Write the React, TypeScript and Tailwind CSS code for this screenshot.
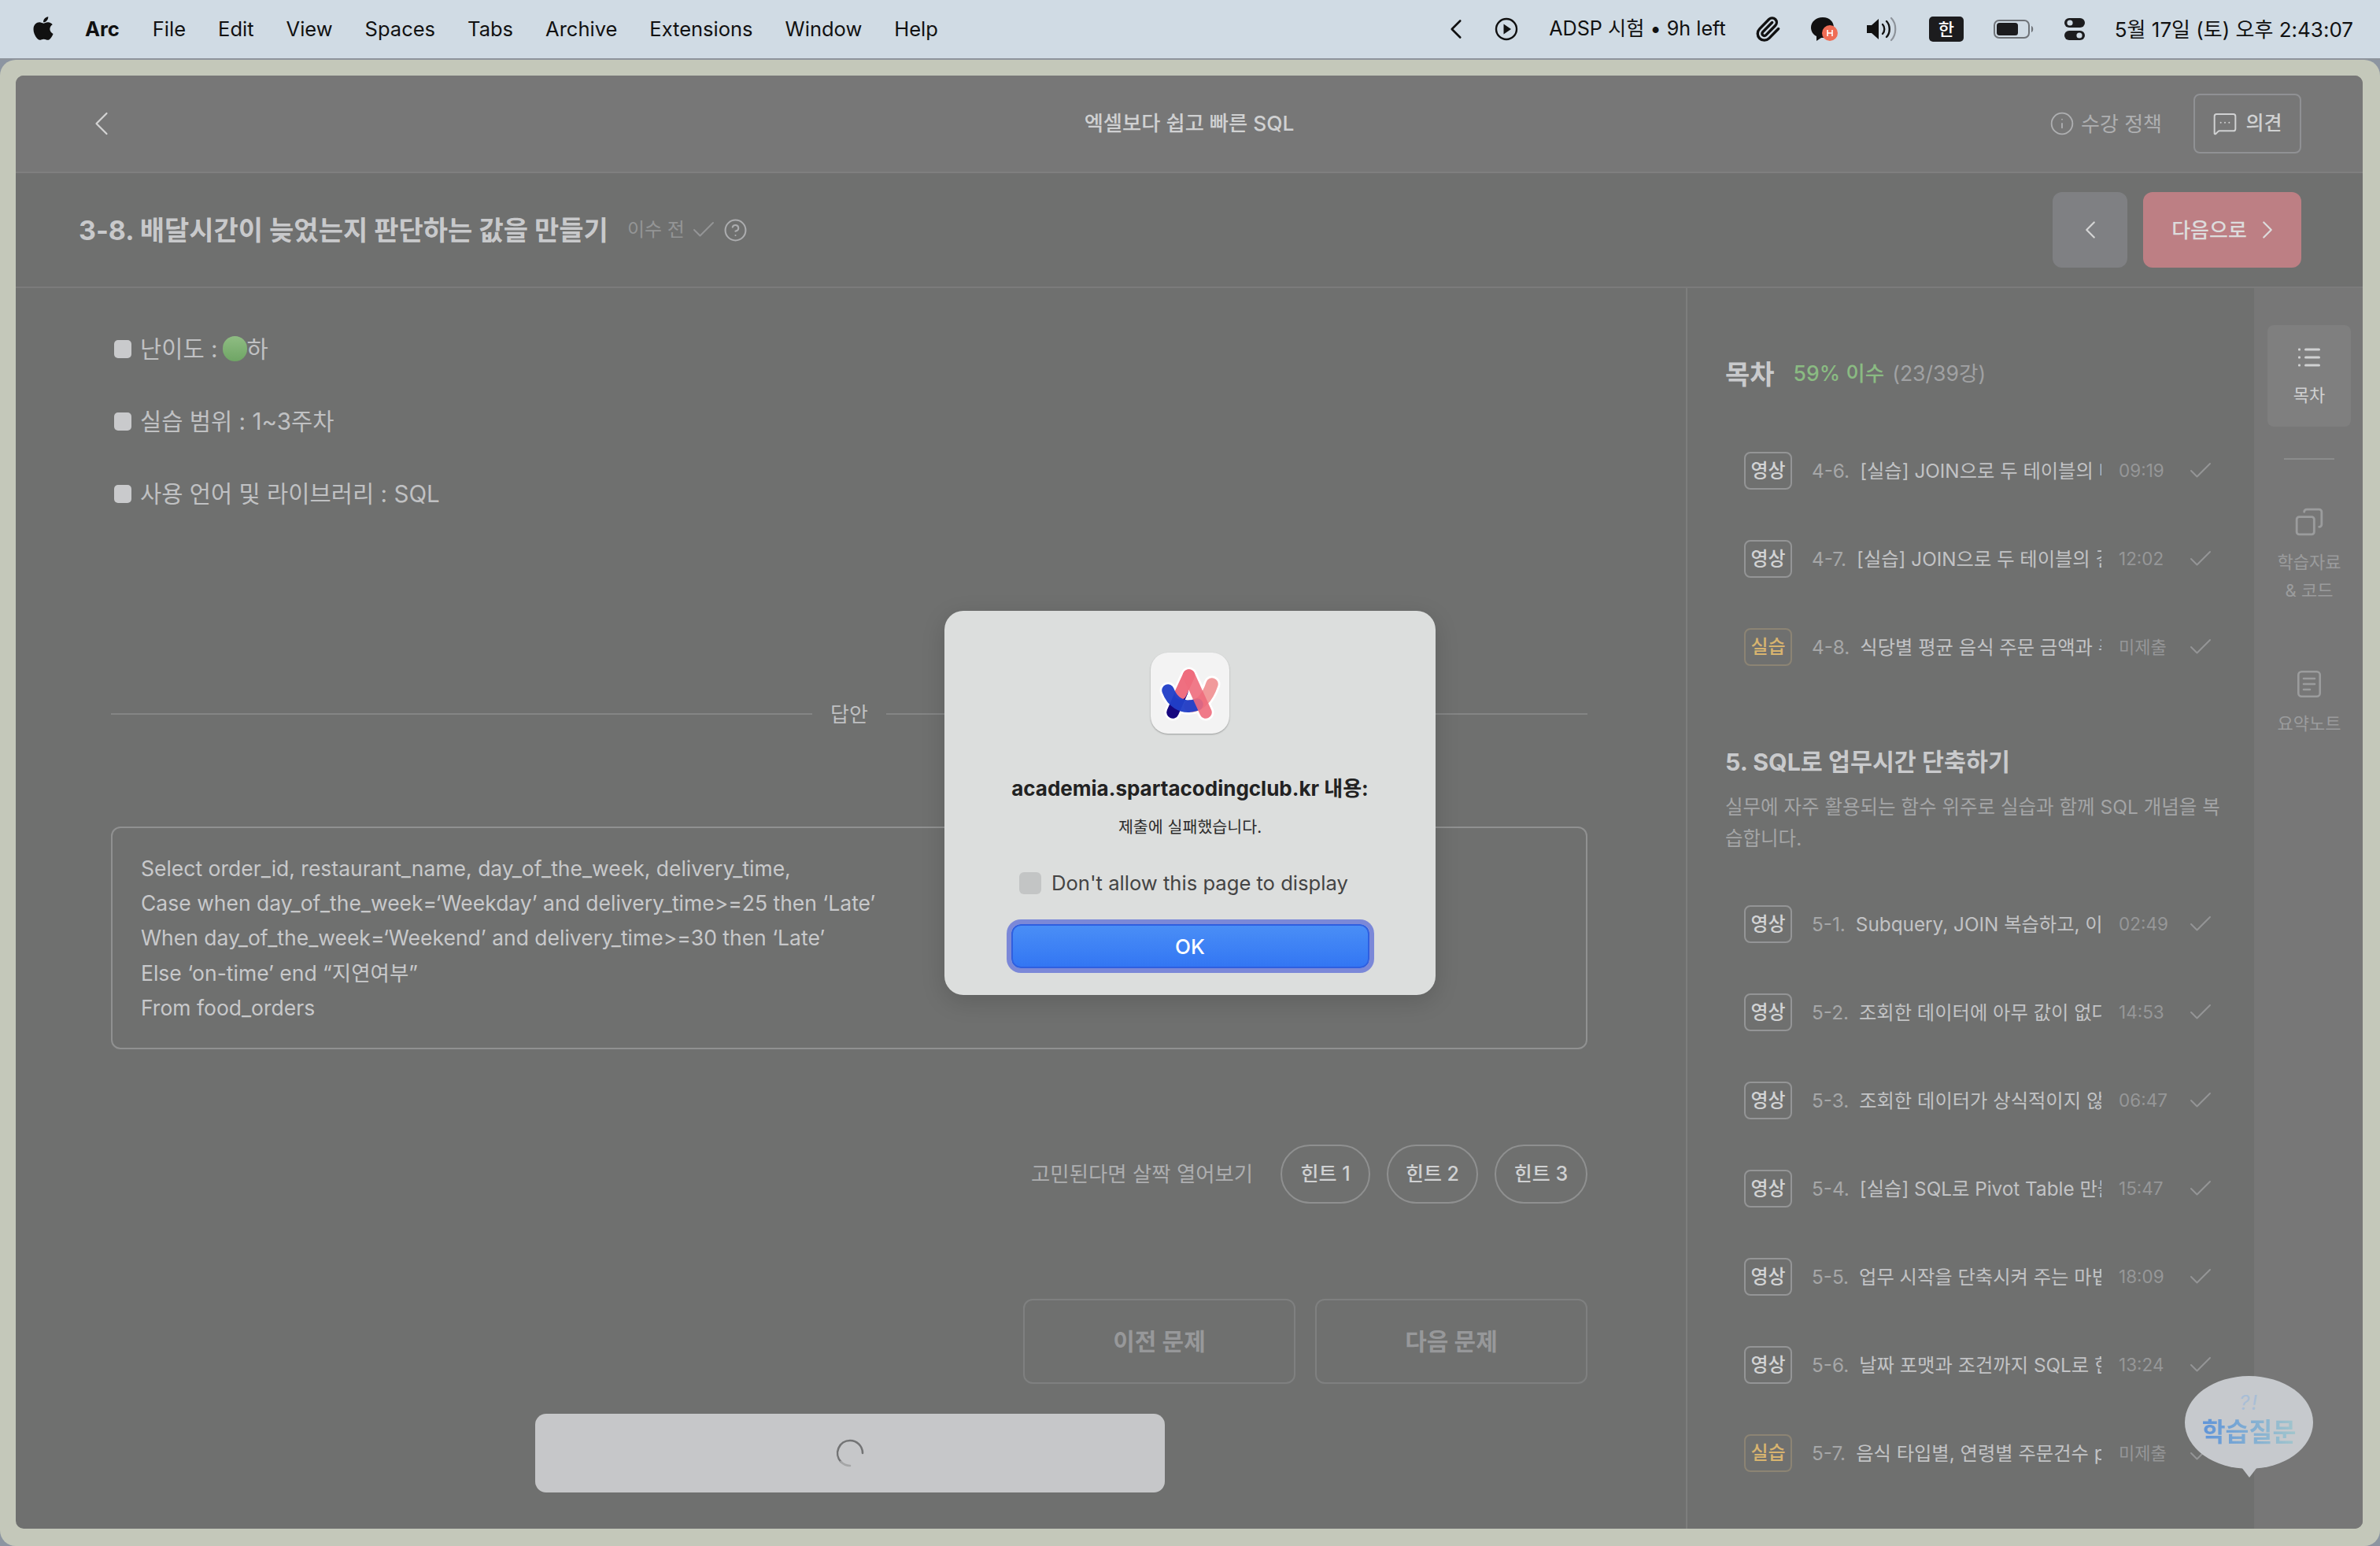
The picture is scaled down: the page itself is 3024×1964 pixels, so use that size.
import React from 'react';
import { Check, ChevronLeft, ChevronRight, CircleHelp, Info, MessageSquareMore, Copy, Paperclip } from 'lucide-react';
import { FaApple } from 'react-icons/fa';

const menus = ['File', 'Edit', 'View', 'Spaces', 'Tabs', 'Archive', 'Extensions', 'Window', 'Help'];

interface Lesson {
  kind: '영상' | '실습';
  num: string;
  title: string;
  time: string;
}

const lessonsTop: Lesson[] = [
  { kind: '영상', num: '4-6.', title: '[실습] JOIN으로 두 테이블의 데이터 조회하기', time: '09:19' },
  { kind: '영상', num: '4-7.', title: '[실습] JOIN으로 두 테이블의 결과 합치기', time: '12:02' },
  { kind: '실습', num: '4-8.', title: '식당별 평균 음식 주문 금액과 주문자 연령', time: '미제출' },
];

const lessonsBottom: Lesson[] = [
  { kind: '영상', num: '5-1.', title: 'Subquery, JOIN 복습하고, 이번 주차 알아보기', time: '02:49' },
  { kind: '영상', num: '5-2.', title: '조회한 데이터에 아무 값이 없다면 어떻게', time: '14:53' },
  { kind: '영상', num: '5-3.', title: '조회한 데이터가 상식적이지 않은 값일 때', time: '06:47' },
  { kind: '영상', num: '5-4.', title: '[실습] SQL로 Pivot Table 만들기', time: '15:47' },
  { kind: '영상', num: '5-5.', title: '업무 시작을 단축시켜 주는 마법의 문법', time: '18:09' },
  { kind: '영상', num: '5-6.', title: '날짜 포맷과 조건까지 SQL로 한 번에', time: '13:24' },
  { kind: '실습', num: '5-7.', title: '음식 타입별, 연령별 주문건수 pivot view', time: '미제출' },
];

const answer = [
  'Select order_id, restaurant_name, day_of_the_week, delivery_time,',
  'Case when day_of_the_week=‘Weekday’ and delivery_time>=25 then ‘Late’',
  'When day_of_the_week=‘Weekend’ and delivery_time>=30 then ‘Late’',
  'Else ‘on-time’ end “지연여부”',
  'From food_orders',
];

const hints = [
  { label: '힌트 1', width: 'w-[114px]' },
  { label: '힌트 2', width: 'w-[116px]' },
  { label: '힌트 3', width: 'w-[118px]' },
];

const LessonRow = ({ lesson }: { lesson: Lesson }) => (
  <div className="flex h-[112px] items-center pl-[24px]">
    <span
      className={
        lesson.kind === '실습'
          ? 'flex h-[48px] w-[61px] shrink-0 items-center justify-center rounded-[8px] border-2 border-[#8c8474] text-[24px] font-medium text-[#d8b46f]'
          : 'flex h-[48px] w-[61px] shrink-0 items-center justify-center rounded-[8px] border-2 border-[#949596] text-[24px] font-medium text-[#d2d3d4]'
      }
    >
      {lesson.kind}
    </span>
    <div className="ml-[25px] flex w-[368px] shrink-0 gap-[13px] overflow-hidden whitespace-nowrap text-[24.3px]">
      <span className="text-[#a6a7a8]">{lesson.num}</span>
      <span className="text-[#c2c3c5]">{lesson.title}</span>
    </div>
    <span className={lesson.kind === '실습' ? 'ml-[22px] w-[92px] shrink-0 text-[22px] text-[#969798]' : 'ml-[22px] w-[92px] shrink-0 text-[22.5px] text-[#969798]'}>
      {lesson.time}
    </span>
    <Check className="ml-[-6px] h-[36px] w-[36px] shrink-0 text-[#949596]" strokeWidth={1.3} />
  </div>
);

const ArcLogo = () => (
  <svg viewBox="0 0 100 100" className="h-[100px] w-[100px]">
    <g fill="none" strokeLinecap="round" strokeLinejoin="round">
      <g stroke="#ffffff" strokeWidth="21">
        <path d="M28 74 L48.6 27 L70 74" />
        <path d="M22 46 C28 62 40 67 50 66 C62 66 72 56 78 38" />
      </g>
      <g strokeWidth="15.5">
        <path d="M50 66 C62 66 72 56 78 38" stroke="#f19a9b" />
        <path d="M28 74 L40 47" stroke="#17077f" />
        <path d="M48.6 27 L38 50" stroke="#ef6f80" />
        <path d="M22 46 C28 62 40 67 50 66 C53 66 56 65 59 64" stroke="#2140c8" opacity="0.96" />
        <path d="M48.6 27 L70 74" stroke="#ee6b7c" opacity="0.9" />
      </g>
    </g>
  </svg>
);

export default function App() {
  return (
    <div className="relative flex h-[1964px] w-[3024px] flex-col overflow-hidden bg-[#8c95a1] font-['Inter','Noto_Sans_CJK_KR',sans-serif]">
      {/* Menu bar */}
      <div className="flex h-[76px] shrink-0 items-center justify-between border-b-2 border-[#8e949c] bg-[#d0dbe4] text-[#111]">
        <div className="flex items-center pl-[40px] text-[25.5px]">
          <FaApple className="mb-[3px] h-[34px] w-[30px]" />
          <span className="ml-[38px] font-bold">Arc</span>
          <div className="ml-[42px] flex gap-[41px]">
            {menus.map(m => (
              <span key={m}>{m}</span>
            ))}
          </div>
        </div>
        <div className="flex items-center pr-[34px] text-[26px]">
          <ChevronLeft className="h-[42px] w-[42px]" strokeWidth={1.5} />
          <svg viewBox="0 0 30 30" className="ml-[28px] h-[30px] w-[30px]">
            <circle cx="15" cy="15" r="13" fill="none" stroke="#111" strokeWidth="2.4" />
            <path d="M11.5 8.5 L21 15 L11.5 21.5 Z" fill="#111" />
          </svg>
          <span className="ml-[39px] text-[25.2px]">ADSP 시험 • 9h left</span>
          <Paperclip className="ml-[36px] h-[34px] w-[34px]" strokeWidth={2.4} />
          <svg viewBox="0 0 38 32" className="ml-[37px] h-[32px] w-[38px]">
            <path d="M16 1 C7 1 1 7 1 14 C1 19 4 23 8 25 L8 31 L14 27 L16 27 C25 27 30 21 30 14 C30 7 25 1 16 1 Z" fill="#111" />
            <circle cx="25" cy="21" r="10" fill="#ef6d55" />
            <path d="M22 17 V25 M28 17 V25 M22 21 H28" stroke="#fff" strokeWidth="1.6" />
          </svg>
          <svg viewBox="0 0 39 32" className="ml-[33px] h-[32px] w-[39px]">
            <path d="M1 11 H7 L16 3 V29 L7 21 H1 Z" fill="#111" />
            <path d="M21 10 C24 13 24 19 21 22" fill="none" stroke="#111" strokeWidth="2.4" strokeLinecap="round" />
            <path d="M26 6 C31 11 31 21 26 26" fill="none" stroke="#111" strokeWidth="2.4" strokeLinecap="round" />
            <path d="M32 2 C39 9 39 23 32 30" fill="none" stroke="#8d939a" strokeWidth="2.2" strokeLinecap="round" />
          </svg>
          <span className="ml-[41px] flex h-[32px] w-[44px] items-center justify-center rounded-[5px] bg-[#1c1c1e] text-[22px] font-medium text-white">한</span>
          <svg viewBox="0 0 52 24" className="ml-[38px] h-[24px] w-[52px]">
            <rect x="1" y="1" width="44" height="22" rx="6" fill="none" stroke="#6f7378" strokeWidth="2" />
            <rect x="4" y="4" width="27" height="16" rx="3.5" fill="#1c1c1e" />
            <path d="M48 8 C51 9 51 15 48 16 Z" fill="#6f7378" />
          </svg>
          <svg viewBox="0 0 26 28" className="ml-[38px] h-[28px] w-[26px]">
            <rect x="0" y="0" width="26" height="12" rx="6" fill="#1c1c1e" />
            <circle cx="7" cy="6" r="3.6" fill="#d0dbe4" />
            <rect x="0" y="16" width="26" height="12" rx="6" fill="#1c1c1e" />
            <circle cx="19" cy="22" r="3.6" fill="#d0dbe4" />
          </svg>
          <span className="ml-[38px]">5월 17일 (토) 오후 2:43:07</span>
        </div>
      </div>

      {/* Browser window */}
      <div className="flex min-h-0 flex-1 flex-col rounded-[20px] bg-[#c4c8ba] pb-[22px] pl-[20px] pr-[22px] pt-[20px]">
        <div className="flex min-h-0 flex-1 flex-col overflow-hidden rounded-[10px] bg-[#6f706f]">
          {/* Top bar */}
          <div className="grid h-[124px] shrink-0 grid-cols-3 items-center border-b-2 border-[#7f7f7f] bg-[#777777] px-[78px]">
            <ChevronLeft className="ml-[5px] h-[52px] w-[52px] text-[#d4d4d4]" strokeWidth={1} />
            <div className="text-center text-[26.3px] font-medium text-[#d0d1d2]">엑셀보다 쉽고 빠른 SQL</div>
            <div className="flex items-center justify-end">
              <Info className="h-[32px] w-[32px] text-[#aeafb1]" strokeWidth={1.4} />
              <span className="ml-[8px] text-[26px] text-[#aeafb1]">수강 정책</span>
              <button className="ml-[40px] flex h-[76px] w-[137px] items-center justify-center gap-[10px] rounded-[8px] border-2 border-[#909194] text-[25px] font-medium text-[#d0d1d2]">
                <MessageSquareMore className="h-[32px] w-[32px]" strokeWidth={1.5} />
                의견
              </button>
            </div>
          </div>

          {/* Title bar */}
          <div className="flex h-[146px] shrink-0 items-center justify-between border-b-2 border-[#7b7b7b] pl-[80px] pr-[78px]">
            <div className="flex items-center">
              <h1 className="text-[34px] font-bold text-[#c8c9cb]">3-8. 배달시간이 늦었는지 판단하는 값을 만들기</h1>
              <span className="ml-[24px] text-[24px] text-[#949596]">이수 전</span>
              <Check className="ml-[6px] h-[36px] w-[36px] text-[#949596]" strokeWidth={1.3} />
              <CircleHelp className="ml-[7px] h-[31px] w-[31px] text-[#acadaf]" strokeWidth={1.6} />
            </div>
            <div className="flex items-center gap-[20px]">
              <button className="flex h-[96px] w-[95px] items-center justify-center rounded-[12px] bg-[#7f8083]">
                <ChevronLeft className="h-[38px] w-[38px] text-[#d4d4d4]" strokeWidth={1.4} />
              </button>
              <button className="flex h-[96px] w-[201px] items-center justify-center gap-[7px] rounded-[12px] bg-[#bd7f84] pl-[12px] text-[26px] font-medium text-[#dcdcdc]">
                다음으로
                <ChevronRight className="h-[38px] w-[38px]" strokeWidth={1.4} />
              </button>
            </div>
          </div>

          {/* Body */}
          <div className="flex min-h-0 flex-1">
            {/* Question */}
            <div className="relative flex w-[2124px] shrink-0 flex-col border-r-2 border-[#7d7e7d] pl-[121px] pr-[125px] pt-[55px]">
              <div className="flex flex-col gap-[48px] pl-[4px] text-[29.6px] text-[#c0c1c3]">
                <div className="flex h-[44px] items-center">
                  <span className="mr-[11px] h-[23px] w-[22px] rounded-[5px] bg-[#c9cacc]" />
                  난이도 :
                  <span className="ml-[6px] h-[32px] w-[31px] rounded-full bg-gradient-to-b from-[#8fbd83] to-[#6fa565]" />
                  하
                </div>
                <div className="flex h-[44px] items-center">
                  <span className="mr-[11px] h-[23px] w-[22px] rounded-[5px] bg-[#c9cacc]" />
                  실습 범위 : 1~3주차
                </div>
                <div className="flex h-[44px] items-center">
                  <span className="mr-[11px] h-[23px] w-[22px] rounded-[5px] bg-[#c9cacc]" />
                  사용 언어 및 라이브러리 : SQL
                </div>
              </div>

              <div className="mt-[238px] flex h-[40px] items-center gap-[23px] text-[26px] text-[#bfc0c2]">
                <div className="h-[2px] flex-1 bg-[#848585]" />
                답안
                <div className="h-[2px] flex-1 bg-[#848585]" />
              </div>

              <div className="mt-[123px] flex h-[283px] flex-col rounded-[12px] border-2 border-[#909191] pl-[36px] pt-[29px] text-[26.5px] leading-[44.2px] text-[#c8c9cb]">
                {answer.map(line => (
                  <div key={line}>{line}</div>
                ))}
              </div>

              <div className="mt-[121px] flex h-[75px] items-center justify-end">
                <span className="mr-[35px] text-[26.4px] text-[#adaeb0]">고민된다면 살짝 열어보기</span>
                <div className="flex gap-[21px]">
                  {hints.map(h => (
                    <button key={h.label} className={`flex h-[75px] ${h.width} items-center justify-center rounded-full border-2 border-[#8f9090] text-[25px] font-medium text-[#d0d1d2]`}>
                      {h.label}
                    </button>
                  ))}
                </div>
              </div>

              <div className="mt-[121px] flex justify-end gap-[25px]">
                {['이전 문제', '다음 문제'].map(b => (
                  <button key={b} className="flex h-[108px] w-[346px] items-center justify-center rounded-[12px] border-2 border-[#7f8080] text-[30px] font-bold text-[#97989a]">
                    {b}
                  </button>
                ))}
              </div>

              {/* Submit in progress */}
              <div className="absolute left-[660px] top-[1430px] flex h-[100px] w-[800px] items-center justify-center rounded-[14px] bg-[#c6c7c9]">
                <svg viewBox="0 0 36 36" className="h-[36px] w-[36px]" fill="none" strokeWidth="2.6" strokeLinecap="round">
                  <path d="M34 18 A16 16 0 0 0 18 2 A16 16 0 0 0 6.5 29" stroke="#737475" />
                  <path d="M6.5 29 A16 16 0 0 0 18 34" stroke="#a5a6a7" />
                </svg>
              </div>
            </div>

            {/* Curriculum */}
            <div className="flex w-[720px] shrink-0 flex-col overflow-hidden pl-[48px] pt-[87px]">
              <div className="flex h-[44px] items-center">
                <span className="text-[34px] font-bold text-[#c9cacc]">목차</span>
                <span className="ml-[24px] text-[26.6px] font-medium text-[#8abb82]">59% 이수</span>
                <span className="ml-[10px] text-[26.6px] text-[#a0a1a3]">(23/39강)</span>
              </div>
              <div className="mt-[45px]">
                {lessonsTop.map(l => (
                  <LessonRow key={l.num} lesson={l} />
                ))}
              </div>
              <h2 className="mt-[68px] text-[30.4px] font-bold leading-[44px] text-[#c9cacc]">5. SQL로 업무시간 단축하기</h2>
              <p className="mt-[15px] w-[640px] text-[24.5px] leading-[40px] text-[#a4a5a6]">
                실무에 자주 활용되는 함수 위주로 실습과 함께 SQL 개념을 복습합니다.
              </p>
              <div className="mt-[33px]">
                {lessonsBottom.map(l => (
                  <LessonRow key={l.num} lesson={l} />
                ))}
              </div>
            </div>

            {/* Side rail */}
            <div className="flex flex-1 flex-col items-center bg-[#777777] pl-[2px] pt-[47px]">
              <div className="flex h-[129px] w-[106px] flex-col items-center rounded-[8px] bg-[#7f7f7f] pt-[29px]">
                <svg viewBox="0 0 28 24" className="h-[24px] w-[28px]" fill="#d0d1d2">
                  <rect x="0" y="0.5" width="3" height="3" rx="1" />
                  <rect x="0" y="10.5" width="3" height="3" rx="1" />
                  <rect x="0" y="20.5" width="3" height="3" rx="1" />
                  <rect x="8" y="0.5" width="20" height="3" rx="1.5" />
                  <rect x="8" y="10.5" width="20" height="3" rx="1.5" />
                  <rect x="8" y="20.5" width="20" height="3" rx="1.5" />
                </svg>
                <span className="mt-[20px] text-[22px] text-[#d0d1d2]">목차</span>
              </div>
              <div className="mt-[40px] h-[2px] w-[64px] bg-[#8b8c8c]" />
              <Copy className="mt-[60px] h-[38px] w-[38px] -scale-x-100 text-[#9b9c9d]" strokeWidth={1.8} />
              <span className="mt-[14px] text-center text-[22px] leading-[36px] text-[#9b9c9d]">
                학습자료
                <br />& 코드
              </span>
              <svg viewBox="0 0 30 34" className="mt-[84px] h-[34px] w-[30px]" fill="none" stroke="#9b9c9d" strokeWidth="2.6" strokeLinecap="round">
                <rect x="1.3" y="1.3" width="27.4" height="31.4" rx="4" />
                <path d="M8 10 H22 M8 17 H22 M8 24 H16" />
              </svg>
              <span className="mt-[17px] text-[22px] text-[#9b9c9d]">요약노트</span>
            </div>
          </div>
        </div>
      </div>

      {/* Help bubble */}
      <div className="absolute left-[2776px] top-[1748px] flex h-[118px] w-[163px] flex-col items-center rounded-[50%] bg-[#c6c9cd] pt-[19px]">
        <span className="text-[26px] italic leading-[30px] tracking-[2px] text-[#a9bed6]">?!</span>
        <span className="mt-[2px] whitespace-nowrap bg-gradient-to-r from-[#5f94d8] to-[#a2c5cc] bg-clip-text text-[32.5px] font-bold leading-[42px] text-transparent">학습질문</span>
        <div className="absolute bottom-[-11px] left-[72px] h-0 w-0 border-x-[10px] border-t-[13px] border-x-transparent border-t-[#c6c9cd]" />
      </div>

      {/* Alert dialog */}
      <div className="absolute left-[1200px] top-[776px] flex h-[488px] w-[624px] flex-col items-center rounded-[24px] bg-[#dcdedd] pt-[53px] shadow-[0_8px_30px_rgba(0,0,0,0.15)]">
        <div className="flex h-[103px] w-[100px] items-center justify-center rounded-[22px] bg-[#f3f3f3] shadow-[0_1px_2px_rgba(0,0,0,0.3)]">
          <ArcLogo />
        </div>
        <div className="mt-[51px] text-[26px] font-bold leading-[38px] text-[#222]">academia.spartacodingclub.kr 내용:</div>
        <div className="mt-[16px] text-[20.6px] leading-[28px] text-[#2c2c2c]">제출에 실패했습니다.</div>
        <div className="mt-[41px] flex items-center gap-[13px] self-start pl-[95px]">
          <span className="h-[28px] w-[28px] rounded-[6px] bg-[#c3c5c5]" />
          <span className="text-[25.6px] leading-[32px] text-[#444]">Don't allow this page to display</span>
        </div>
        <button className="mt-[36px] flex h-[56px] w-[455px] items-center justify-center rounded-[12px] border-2 border-[#2f5fe0] bg-gradient-to-b from-[#4a8ef6] to-[#3376f3] text-[26px] font-medium text-white shadow-[0_0_0_6px_#7b88d8]">
          OK
        </button>
      </div>
    </div>
  );
}
